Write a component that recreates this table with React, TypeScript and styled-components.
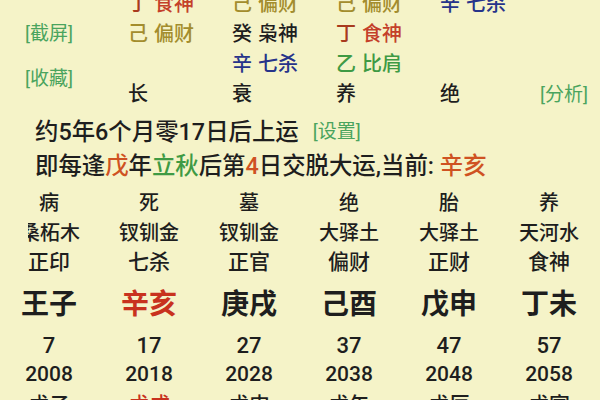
import React from "react";
import styled, { createGlobalStyle } from "styled-components";

const Global = createGlobalStyle`
  html, body {
    margin: 0;
    padding: 0;
    background: #f5f3c8;
    width: 600px;
    height: 400px;
    overflow: hidden;
  }
  body {
    font-family: Roboto, "Noto Sans CJK SC", sans-serif;
    font-weight: 500;
    color: #1e1e1e;
  }
`;

const C = {
  dark: "#1e1e1e",
  olive: "#a38d2d",
  brown: "#a83a1e",
  red: "#c4402a",
  navy: "#27348a",
  green: "#3f9a44",
  label: "#4aa45e",
  bright: "#c8321e",
  orange: "#cf5222",
};

const Page = styled.div`
  width: 600px;
  height: 400px;
  overflow: hidden;
  display: flex;
  flex-direction: column;
`;

const TopGrid = styled.div`
  margin-top: -11px;
  display: grid;
  grid-template-columns: 128px 104px 104px 104px 100px 1fr;
  grid-auto-rows: 30px;
  align-items: center;
  font-size: 20px;
  line-height: 30px;
`;

const Label = styled.span<{ $row: string }>`
  grid-column: 1;
  grid-row: ${(p) => p.$row};
  padding-left: 25px;
  color: ${C.label};
  font-size: 19px;
  font-weight: 400;
  align-self: center;
`;

const Cell = styled.span<{ $col: number; $row: number }>`
  grid-column: ${(p) => p.$col};
  grid-row: ${(p) => p.$row};
  white-space: nowrap;
`;

const Stem = styled.span<{ $c: string }>`
  color: ${(p) => p.$c};
  margin-right: 6px;
`;

const God = styled.span<{ $c: string }>`
  color: ${(p) => p.$c};
`;

const GreenTag = styled.span<{ $size?: number; $gap?: number }>`
  color: ${C.label};
  font-size: ${(p) => p.$size ?? 19}px;
  font-weight: 400;
  margin-left: ${(p) => p.$gap ?? 0}px;
`;

const Lines = styled.div`
  margin-top: 6px;
  padding-left: 35px;
  display: flex;
  flex-direction: column;
  font-size: 23.4px;
  line-height: 34px;
  white-space: nowrap;
`;

const Line = styled.div`
  display: flex;
  align-items: center;
`;

const Tint = styled.span<{ $c: string }>`
  color: ${(p) => p.$c};
`;

const Luck = styled.div`
  margin-top: 5px;
  margin-left: -1px;
  display: grid;
  grid-template-columns: repeat(6, 100px);
  grid-template-rows: 30px 30px 28px 57px 26px 30px 32px;
  justify-items: center;
  align-items: center;
`;

const LuckCell = styled.span<{ $size: number; $bold?: boolean; $c?: string }>`
  font-size: ${(p) => p.$size}px;
  font-weight: ${(p) => (p.$bold ? 700 : 500)};
  color: ${(p) => p.$c ?? C.dark};
  white-space: nowrap;
  line-height: 1;
`;

const ClipBox = styled.span`
  justify-self: start;
  width: 52px;
  margin-left: 29px;
  overflow: hidden;
  display: flex;
  justify-content: flex-end;
`;

type Pair = { s: string; sc: string; g: string; gc: string };

const top: { col: number; row: number; p: Pair }[] = [
  { col: 2, row: 1, p: { s: "丁", sc: C.brown, g: "食神", gc: C.red } },
  { col: 3, row: 1, p: { s: "己", sc: C.olive, g: "偏财", gc: C.olive } },
  { col: 4, row: 1, p: { s: "己", sc: C.olive, g: "偏财", gc: C.olive } },
  { col: 5, row: 1, p: { s: "辛", sc: C.navy, g: "七杀", gc: C.navy } },
  { col: 2, row: 2, p: { s: "己", sc: C.olive, g: "偏财", gc: C.olive } },
  { col: 3, row: 2, p: { s: "癸", sc: C.dark, g: "枭神", gc: C.dark } },
  { col: 4, row: 2, p: { s: "丁", sc: C.brown, g: "食神", gc: C.red } },
  { col: 3, row: 3, p: { s: "辛", sc: C.navy, g: "七杀", gc: C.navy } },
  { col: 4, row: 3, p: { s: "乙", sc: C.green, g: "比肩", gc: C.green } },
];

const phases = ["长", "衰", "养", "绝"];

const cols = [
  { st: "病", ny: "桑柘木", god: "正印", gz: "王子", age: "7", yr: "2008", y2: "戊子", hot: false },
  { st: "死", ny: "钗钏金", god: "七杀", gz: "辛亥", age: "17", yr: "2018", y2: "戊戌", hot: true },
  { st: "墓", ny: "钗钏金", god: "正官", gz: "庚戌", age: "27", yr: "2028", y2: "戊申", hot: false },
  { st: "绝", ny: "大驿土", god: "偏财", gz: "己酉", age: "37", yr: "2038", y2: "戊午", hot: false },
  { st: "胎", ny: "大驿土", god: "正财", gz: "戊申", age: "47", yr: "2048", y2: "戊辰", hot: false },
  { st: "养", ny: "天河水", god: "食神", gz: "丁未", age: "57", yr: "2058", y2: "戊寅", hot: false },
];

export default function App() {
  return (
    <Page>
      <Global />
      <TopGrid>
        {top.map((t, i) => (
          <Cell key={i} $col={t.col} $row={t.row}>
            <Stem $c={t.p.sc}>{t.p.s}</Stem>
            <God $c={t.p.gc}>{t.p.g}</God>
          </Cell>
        ))}
        <Label $row="2">[截屏]</Label>
        <Label $row="3 / span 2">[收藏]</Label>
        {phases.map((p, i) => (
          <Cell key={p + i} $col={i + 2} $row={4}>
            {p}
          </Cell>
        ))}
        <Cell $col={6} $row={4}>
          <GreenTag>[分析]</GreenTag>
        </Cell>
      </TopGrid>

      <Lines>
        <Line>
          约5年6个月零17日后上运
          <GreenTag $size={19} $gap={14}>
            [设置]
          </GreenTag>
        </Line>
        <Line>
          即每逢<Tint $c={C.orange}>戊</Tint>年<Tint $c={C.green}>立秋</Tint>后第
          <Tint $c={C.orange}>4</Tint>日交脱大运,当前:&nbsp;
          <Tint $c={C.orange}>辛亥</Tint>
        </Line>
      </Lines>

      <Luck>
        {cols.map((c, i) => (
          <LuckCell key={"st" + i} $size={20} style={{ gridColumn: i + 1, gridRow: 1 }}>
            {c.st}
          </LuckCell>
        ))}
        {cols.map((c, i) =>
          i === 0 ? (
            <ClipBox key={"ny" + i} style={{ gridColumn: 1, gridRow: 2 }}>
              <LuckCell $size={20}>{c.ny}</LuckCell>
            </ClipBox>
          ) : (
            <LuckCell key={"ny" + i} $size={20} style={{ gridColumn: i + 1, gridRow: 2 }}>
              {c.ny}
            </LuckCell>
          )
        )}
        {cols.map((c, i) => (
          <LuckCell key={"gd" + i} $size={21} style={{ gridColumn: i + 1, gridRow: 3 }}>
            {c.god}
          </LuckCell>
        ))}
        {cols.map((c, i) => (
          <LuckCell
            key={"gz" + i}
            $size={28}
            $bold
            $c={c.hot ? C.bright : C.dark}
            style={{ gridColumn: i + 1, gridRow: 4 }}
          >
            {c.gz}
          </LuckCell>
        ))}
        {cols.map((c, i) => (
          <LuckCell key={"ag" + i} $size={22} style={{ gridColumn: i + 1, gridRow: 5 }}>
            {c.age}
          </LuckCell>
        ))}
        {cols.map((c, i) => (
          <LuckCell key={"yr" + i} $size={21} style={{ gridColumn: i + 1, gridRow: 6 }}>
            {c.yr}
          </LuckCell>
        ))}
        {cols.map((c, i) => (
          <LuckCell
            key={"y2" + i}
            $size={21}
            $c={c.hot ? C.bright : C.dark}
            style={{ gridColumn: i + 1, gridRow: 7 }}
          >
            {c.y2}
          </LuckCell>
        ))}
      </Luck>
    </Page>
  );
}
